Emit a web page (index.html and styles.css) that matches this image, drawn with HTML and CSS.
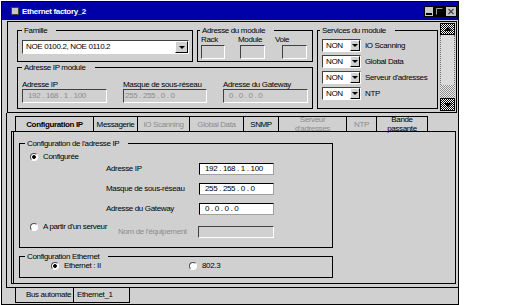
FILE: index.html
```html
<!DOCTYPE html>
<html lang="fr">
<head>
  <meta charset="UTF-8" />
  <title>Ethernet factory_2</title>
  <link rel="stylesheet" href="styles.css">
</head>
<body>
  <div class="window">
    <!-- Title bar -->
    <div class="titlebar">
      <span class="sysbox"></span>
      <span class="wtitle">Ethernet factory_2</span>
      <svg class="wbtns" width="33" height="11" viewBox="0 0 33 11">
        <rect x="0.5" y="0.5" width="9" height="10" fill="#c8c8c8" stroke="#000"/>
        <rect x="2" y="7" width="6" height="2" fill="#000"/>
        <rect x="10.5" y="0.5" width="10" height="10" fill="#000" stroke="#000"/>
        <path d="M12.5 8.5V2.5H18.5" fill="none" stroke="#a0a0a0"/>
        <rect x="21.5" y="0.5" width="11" height="10" fill="#c8c8c8" stroke="#000"/>
        <path d="M24.5 3l5 5M29.5 3l-5 5" stroke="#404040" stroke-width="1.1"/>
      </svg>
    </div>

    <!-- Module header -->
    <div class="upper">
      <div class="upper-left">
        <div class="row1">
          <div class="group famille">
            <div class="gtitle">Famille</div>
            <div class="combo"><span class="cval">NOE 0100.2, NOE 0110.2</span><span class="cbtn"></span></div>
          </div>
          <div class="group module">
            <div class="gtitle">Adresse du module</div>
            <div class="mod-labels"><span>Rack</span><span>Module</span><span>Voie</span></div>
            <div class="mod-boxes">
              <span class="box dis"></span>
              <span class="box dis"></span>
              <span class="box dis"></span>
            </div>
          </div>
        </div>
        <div class="group ipmod">
          <div class="gtitle">Adresse IP module</div>
          <div class="ipgrid">
            <span class="lbl">Adresse IP</span>
            <span class="lbl">Masque de sous-réseau</span>
            <span class="lbl">Adresse du Gateway</span>
            <span class="box dis">192 . 168 . 1 . 100</span>
            <span class="box dis tight">255 . 255 . 0 . 0</span>
            <span class="box dis">0 . 0 . 0 . 0</span>
          </div>
        </div>
      </div>

      <div class="group services">
        <div class="gtitle">Services du module</div>
        <div class="svc-list">
          <div class="svc"><span class="combo"><span class="cval">NON</span><span class="cbtn"></span></span><span>IO Scanning</span></div>
          <div class="svc"><span class="combo"><span class="cval">NON</span><span class="cbtn"></span></span><span>Global Data</span></div>
          <div class="svc"><span class="combo"><span class="cval">NON</span><span class="cbtn"></span></span><span>Serveur d'adresses</span></div>
          <div class="svc"><span class="combo"><span class="cval">NON</span><span class="cbtn"></span></span><span>NTP</span></div>
        </div>
      </div>

      <div class="vscroll">
        <span class="sbtn up"></span>
        <span class="sthumb"></span>
        <span class="strack"></span>
        <span class="sbtn down"></span>
      </div>
    </div>

    <!-- Tabbed configuration -->
    <div class="lower">
      <div class="tabs">
        <span class="tab sel">Configuration IP</span>
        <span class="tab">Messagerie</span>
        <span class="tab off">IO Scanning</span>
        <span class="tab off">Global Data</span>
        <span class="tab">SNMP</span>
        <span class="tab off">Serveur<br>d'adresses</span>
        <span class="tab off">NTP</span>
        <span class="tab">Bande<br>passante</span>
      </div>
      <div class="panel">
        <div class="group cfgip">
          <div class="gtitle">Configuration de l'adresse IP</div>
          <div class="radio cfg-top"><span class="rb on"></span>Configurée</div>
          <div class="fields">
            <span class="lbl">Adresse IP</span>
            <span class="box en">192 . 168 . 1 . 100</span>
            <span class="lbl">Masque de sous-réseau</span>
            <span class="box en">255 . 255 . 0 . 0</span>
            <span class="lbl">Adresse du Gateway</span>
            <span class="box en">0 . 0 . 0 . 0</span>
          </div>
          <div class="server-row">
            <div class="radio"><span class="rb"></span>A partir d'un serveur</div>
            <span class="lbl off">Nom de l'équipement</span>
            <span class="box dis"></span>
          </div>
        </div>
        <div class="group cfgeth">
          <div class="gtitle">Configuration Ethernet</div>
          <div class="eth-row">
            <div class="radio"><span class="rb on"></span>Ethernet : II</div>
            <div class="radio"><span class="rb"></span>802.3</div>
          </div>
        </div>
      </div>
    </div>

    <div class="btabs">
      <span class="btab b1">Bus automate</span>
      <span class="btab b2">Ethernet_1</span>
    </div>
  </div>
</body>
</html>
```

FILE: styles.css
```css
* {
  box-sizing: border-box;
}

body {
  margin: 0;
  background: #fff;
  font-family: "Liberation Sans", Arial, sans-serif;
  font-size: 8px;
  letter-spacing: -0.35px;
  line-height: 9px;
  color: #000;
}

.window {
  display: flex;
  flex-direction: column;
  width: 458px;
  height: 304px;
  margin: 1px 0 0 1px;
  border: 1px solid #000;
  background: #d0d0d0;
}

/* title bar */
.titlebar {
  flex: none;
  display: flex;
  align-items: center;
  height: 18px;
  padding: 0 1px 0 9px;
  background: #0000a8;
  color: #fff;
  font-weight: bold;
}

.sysbox {
  width: 8px;
  height: 8px;
  margin-right: 3px;
  background: #c8c8c8;
  border: 1px solid #404040;
}

.wbtns {
  display: block;
  margin-left: auto;
}

/* group boxes */
.group {
  flex: none;
  border: 1px solid #000;
}

.gtitle {
  width: fit-content;
  height: 9px;
  margin: -5px 0 0 4px;
  padding: 0 9px 0 2px;
  background: #d0d0d0;
  white-space: nowrap;
}

.lbl {
  white-space: nowrap;
}

.off {
  color: #8c8c8c;
}

/* boxes and combos */
.box {
  display: block;
  border: 1px solid;
  padding-left: 5px;
  line-height: 12px;
  white-space: nowrap;
  overflow: hidden;
}

.box.dis {
  background: #d0d0d0;
  border-color: #404040 #fff #fff #404040;
  color: #8c8c8c;
}

.box.en {
  background: #fff;
  border-color: #000 #a0a0a0 #a0a0a0 #000;
}

.box.tight {
  padding-left: 1px;
}

.combo {
  display: flex;
  background: #fff;
  border: 1px solid;
  border-color: #404040 #fff #fff #404040;
}

.combo .cval {
  flex: 1;
  padding-left: 3px;
  line-height: 11px;
  white-space: nowrap;
}

.cbtn {
  display: flex;
  align-items: center;
  justify-content: center;
  background: #d0d0d0;
  border: 1px solid;
  border-color: #fff #000 #000 #fff;
}

.cbtn::after {
  content: "";
  border-left: 3px solid transparent;
  border-right: 3px solid transparent;
  border-top: 3px solid #000;
}

/* upper panel */
.upper {
  flex: none;
  display: flex;
  align-items: flex-start;
  width: 450px;
  height: 92px;
  margin: 1px 0 0 5px;
  border: 1px solid #000;
}

.upper-left {
  width: 296px;
  margin: 8px 0 0 9px;
}

.row1 {
  display: flex;
  gap: 4px;
}

.famille {
  width: 176px;
  height: 32px;
}

.famille .combo {
  width: 167px;
  height: 14px;
  margin: 5px 0 0 4px;
}

.famille .cval {
  line-height: 12px;
}

.famille .cbtn {
  width: 13px;
}

.module {
  width: 116px;
  height: 32px;
}

.module .gtitle,
.services .gtitle {
  margin-left: 2px;
}

.mod-labels {
  display: flex;
  margin-left: 3px;
}

.mod-labels span {
  width: 38px;
}

.mod-boxes {
  display: flex;
  margin: 1px 0 0 3px;
}

.mod-boxes .box {
  height: 14px;
  width: 24px;
}

.mod-boxes .box:nth-child(2) {
  width: 25px;
  margin-left: 15px;
}

.mod-boxes .box:nth-child(3) {
  width: 25px;
  margin-left: 17px;
}

.ipmod {
  height: 42px;
  margin-top: 5px;
}

.ipgrid {
  display: grid;
  grid-template-columns: 85px 84px 85px;
  grid-template-rows: 9px 14px;
  column-gap: 16px;
  margin: 8px 0 0 4px;
}

.services {
  width: 121px;
  height: 79px;
  margin: 8px 0 0 4px;
}

.svc-list {
  margin: 4px 0 0 4px;
}

.svc {
  display: flex;
  align-items: center;
  height: 13px;
  margin-bottom: 3px;
  white-space: nowrap;
}

.svc .combo {
  width: 39px;
  height: 13px;
  margin-right: 4px;
}

.svc .cbtn {
  width: 10px;
}

/* scroll bar */
.vscroll {
  flex: none;
  display: flex;
  flex-direction: column;
  width: 15px;
  height: 88px;
  margin: 1px 0 0 2px;
}

.sbtn {
  flex: none;
  display: flex;
  align-items: center;
  justify-content: center;
  border: 1px solid #000;
  background: repeating-conic-gradient(#000 0 25%, #fff 0 50%) 0 0 / 2px 2px;
}

.sbtn.up {
  height: 12px;
}

.sbtn.down {
  height: 13px;
}

.sbtn.up::after {
  content: "";
  border-left: 4px solid transparent;
  border-right: 4px solid transparent;
  border-bottom: 4px solid #000;
}

.sbtn.down::after {
  content: "";
  border-left: 4px solid transparent;
  border-right: 4px solid transparent;
  border-top: 4px solid #000;
}

.sthumb {
  flex: none;
  height: 50px;
  background: #dadada;
  border-left: 1px dotted #707070;
  border-right: 1px dotted #707070;
}

.strack {
  flex: none;
  height: 13px;
  background: repeating-conic-gradient(#909090 0 25%, #e8e8e8 0 50%) 0 0 / 2px 2px;
}

/* tabbed area */
.lower {
  flex: none;
  width: 452px;
  height: 175px;
  margin-left: 4px;
  padding-top: 3px;
  border-left: 1px solid #000;
  border-bottom: 1px solid #000;
}

.tabs {
  display: flex;
  height: 15px;
  margin-left: 8px;
}

.tab {
  display: flex;
  align-items: center;
  justify-content: center;
  text-align: center;
  border-top: 1px solid #000;
  border-left: 1px solid #000;
  white-space: nowrap;
}

.tab:nth-child(1) { width: 78px; font-weight: bold; }
.tab:nth-child(2) { width: 44px; }
.tab:nth-child(3) { width: 52px; }
.tab:nth-child(4) { width: 54px; }
.tab:nth-child(5) { width: 35px; }
.tab:nth-child(6) { width: 68px; }
.tab:nth-child(7) { width: 30px; }
.tab:nth-child(8) { width: 52px; border-right: 1px solid #000; }

.panel {
  width: 445px;
  height: 153px;
  margin-left: 4px;
  border: 1px solid #000;
  border-left: 3px double #000;
}

.cfgip {
  width: 314px;
  height: 105px;
  margin: 11px 0 0 5px;
}

.cfgip .gtitle,
.cfgeth .gtitle {
  margin-left: 5px;
}

.radio {
  display: flex;
  align-items: center;
  height: 9px;
  white-space: nowrap;
}

.rb {
  flex: none;
  width: 8px;
  height: 8px;
  margin-right: 5px;
  border-radius: 50%;
  border: 1px solid;
  border-color: #505050 #fff #fff #505050;
  background: #fff;
}

.rb.on {
  background: radial-gradient(circle, #000 0 1.5px, #fff 2.2px);
}

.cfg-top {
  margin: 4px 0 0 10px;
}

.fields {
  display: grid;
  grid-template-columns: 93px 75px;
  grid-template-rows: repeat(3, 12px);
  row-gap: 8px;
  margin: 2px 0 0 86px;
}

.fields .lbl {
  line-height: 12px;
}

.fields .box {
  height: 12px;
  line-height: 10px;
}

.server-row {
  display: flex;
  align-items: flex-start;
  margin-top: 7px;
}

.server-row .radio {
  width: 88px;
  margin-left: 10px;
}

.server-row .lbl {
  width: 80px;
  margin-top: 4px;
  line-height: 12px;
}

.server-row .box {
  width: 76px;
  height: 12px;
  margin-top: 4px;
}

.cfgeth {
  width: 314px;
  height: 22px;
  margin: 8px 0 0 5px;
}

.eth-row {
  display: flex;
  margin-left: 31px;
}

.eth-row .radio:first-child {
  width: 138px;
}

/* bottom tabs */
.btabs {
  flex: none;
  display: flex;
  height: 15px;
  margin-left: 13px;
}

.btab {
  border-left: 1px solid #000;
  border-bottom: 1px solid #000;
  line-height: 14px;
  white-space: nowrap;
}

.btab.b1 {
  width: 58px;
  padding-left: 10px;
}

.btab.b2 {
  width: 57px;
  padding-left: 3px;
  border-right: 1px solid #000;
}
```
